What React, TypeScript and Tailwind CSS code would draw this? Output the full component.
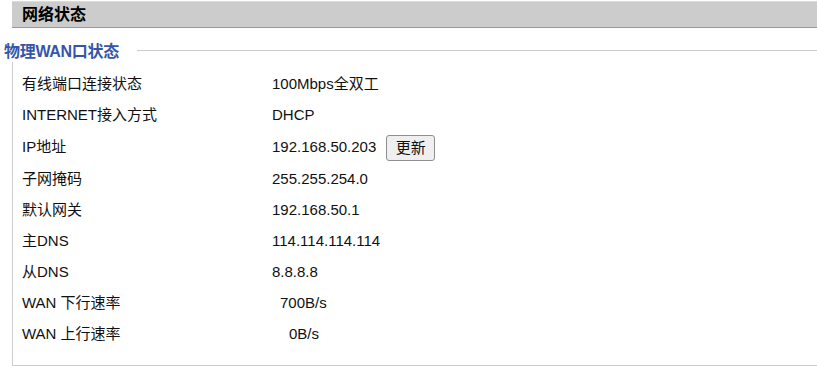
import React from 'react'

const rows: { label: string; value: string; h?: string; pad?: string; btn?: boolean }[] = [
  { label: '有线端口连接状态', value: '100Mbps全双工' },
  { label: 'INTERNET接入方式', value: 'DHCP' },
  { label: 'IP地址', value: '192.168.50.203', h: 'h-[33px]', btn: true },
  { label: '子网掩码', value: '255.255.254.0' },
  { label: '默认网关', value: '192.168.50.1' },
  { label: '主DNS', value: '114.114.114.114' },
  { label: '从DNS', value: '8.8.8.8' },
  { label: 'WAN 下行速率', value: '700B/s', pad: 'pl-[8px]' },
  { label: 'WAN 上行速率', value: '0B/s', pad: 'pl-[17px]' },
]

export default function App() {
  return (
    <div className="h-[369px] w-[817px] overflow-hidden bg-white font-['Segoe_UI','Liberation_Sans','Noto_Sans_CJK_SC',sans-serif] text-[15px] text-[#111]">
      <div className="pt-px">
        <div className="ml-[12px] flex h-[27px] items-center border-t border-b border-t-[#dcdcdc] border-b-[#999] bg-[#cccccc] pl-[10px]">
          <span className="text-[16px] font-bold text-black">网络状态</span>
        </div>
      </div>

      <div className="mt-[14px] flex h-[20px] items-center">
        <span className="ml-[4px] text-[16px] font-bold tracking-[-0.3px] text-[#3556a8]">物理WAN口状态</span>
        <div className="ml-[18px] mb-[3px] h-px flex-1 bg-[#cccccc]" />
      </div>

      <div className="ml-[12px] h-[304px] border-b border-l border-[#cccccc] pt-[7px]">
        {rows.map((r) => (
          <div key={r.label} className={`flex items-center ${r.h ?? 'h-[31px]'}`}>
            <div className="w-[259px] pl-[9px]">{r.label}</div>
            <div className={`flex items-center ${r.pad ?? ''}`}>
              <span>{r.value}</span>
              {r.btn && (
                <button className="ml-[10px] h-[26px] w-[49px] rounded-[3px] border border-[#8f8f8f] bg-[#efefef] text-[15px] leading-none">
                  更新
                </button>
              )}
            </div>
          </div>
        ))}
      </div>
      <div className="ml-[287px] mt-[3px] h-[2px] w-[3px] bg-[#3a5ad8]" />
    </div>
  )
}
